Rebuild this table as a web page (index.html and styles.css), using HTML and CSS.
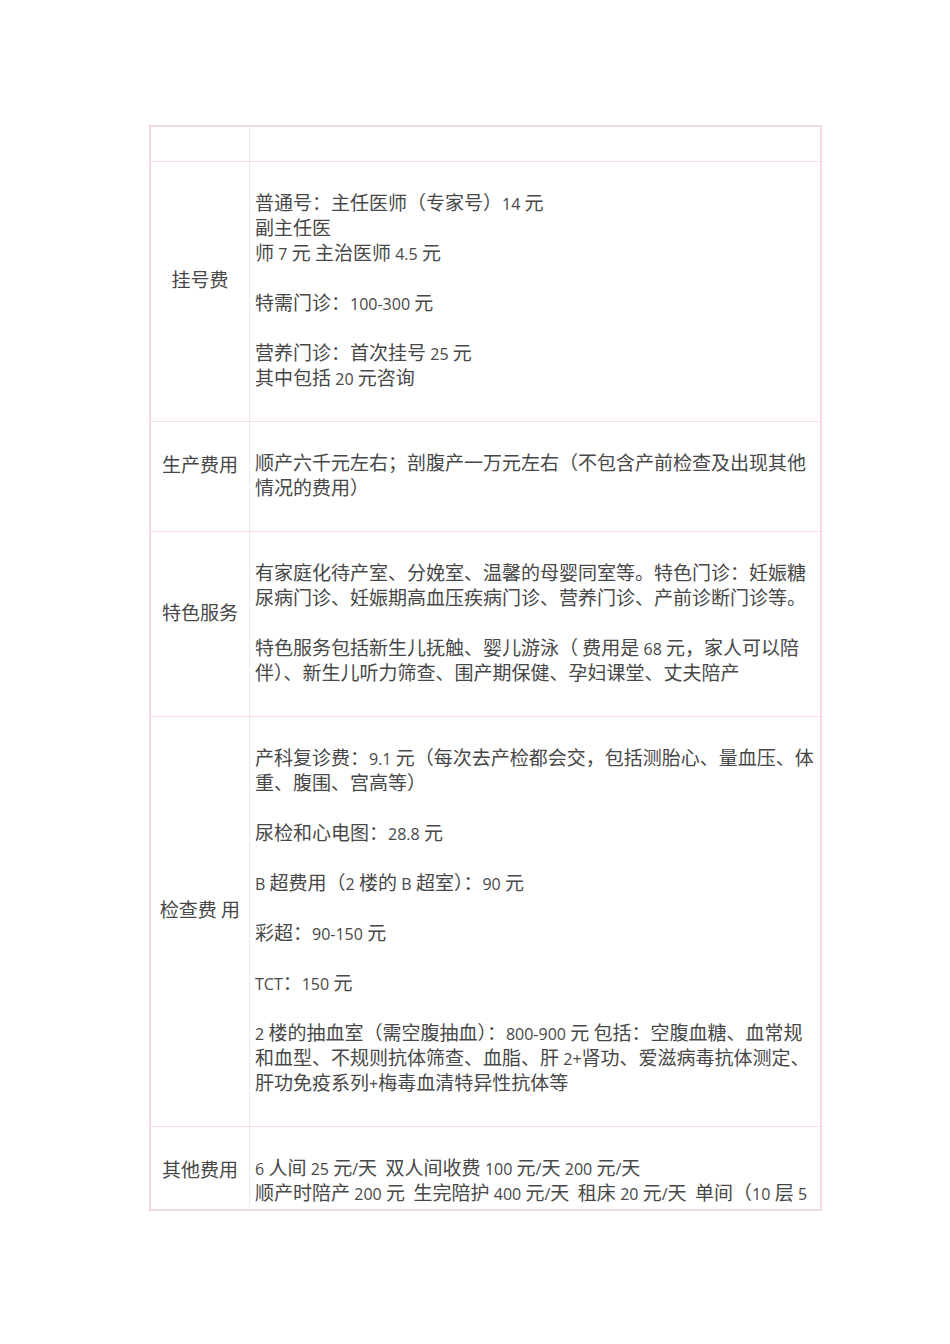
FILE: index.html
```html
<!DOCTYPE html>
<html lang="zh-CN">
<head>
<meta charset="utf-8">
<title>费用</title>
<link rel="stylesheet" href="styles.css">
</head>
<body>
<div class="page">
<table class="fees">
  <tr class="empty">
    <td class="lbl"></td>
    <td class="txt"></td>
  </tr>
  <tr>
    <td class="lbl up">挂号费</td>
    <td class="txt">普通号：主任医师（专家号）<span class="n">14</span> 元<br>副主任医<br>师 <span class="n">7</span> 元 主治医师 <span class="n">4.5</span> 元<br><br>特需门诊：<span class="n">100-300</span> 元<br><br>营养门诊：首次挂号 <span class="n">25</span> 元<br>其中包括 <span class="n">20</span> 元咨询</td>
  </tr>
  <tr>
    <td class="lbl up">生产费用</td>
    <td class="txt">顺产六千元左右；剖腹产一万元左右（不包含产前检查及出现其他<br>情况的费用）</td>
  </tr>
  <tr>
    <td class="lbl up">特色服务</td>
    <td class="txt">有家庭化待产室、分娩室、温馨的母婴同室等。特色门诊：妊娠糖<br>尿病门诊、妊娠期高血压疾病门诊、营养门诊、产前诊断门诊等。<br><br>特色服务包括新生儿抚触、婴儿游泳（ 费用是 <span class="n">68</span> 元，家人可以陪<br>伴）、新生儿听力筛查、围产期保健、孕妇课堂、丈夫陪产</td>
  </tr>
  <tr>
    <td class="lbl up">检查费 用</td>
    <td class="txt">产科复诊费：<span class="n">9.1</span> 元（每次去产检都会交，包括测胎心、量血压、体<br>重、腹围、宫高等）<br><br>尿检和心电图：<span class="n">28.8</span> 元<br><br><span class="n">B</span> 超费用（<span class="n">2</span> 楼的 <span class="n">B</span> 超室）：<span class="n">90</span> 元<br><br>彩超：<span class="n">90-150</span> 元<br><br><span class="n">TCT</span>：<span class="n">150</span> 元<br><br><span class="n">2</span> 楼的抽血室（需空腹抽血）：<span class="n">800-900</span> 元 包括：空腹血糖、血常规<br>和血型、不规则抗体筛查、血脂、肝 <span class="n">2+</span>肾功、爱滋病毒抗体测定、<br>肝功免疫系列<span class="n">+</span>梅毒血清特异性抗体等</td>
  </tr>
  <tr class="last">
    <td class="lbl">其他费用</td>
    <td class="txt"><span class="n">6</span> 人间 <span class="n">25</span> 元<span class="n">/</span>天&nbsp; 双人间收费 <span class="n">100</span> 元<span class="n">/</span>天 <span class="n">200</span> 元<span class="n">/</span>天<br>顺产时陪产 <span class="n">200</span> 元&nbsp; 生完陪护 <span class="n">400</span> 元<span class="n">/</span>天&nbsp; 租床 <span class="n">20</span> 元<span class="n">/</span>天&nbsp; 单间（<span class="n">10</span> 层 <span class="n">5</span></td>
  </tr>
</table>
</div>
</body>
</html>
```

FILE: styles.css
```css
html, body {
  margin: 0;
  padding: 0;
  background: #ffffff;
}

.page {
  width: 950px;
  height: 1344px;
  padding: 125px 0 0 149px;
  box-sizing: border-box;
}

.fees {
  border-collapse: collapse;
  width: 673px;
  table-layout: fixed;
  border: 2px solid #f6d9e1;
  font-family: "Noto Sans CJK SC", "Open Sans", sans-serif;
  font-size: 19px;
  line-height: 25px;
  color: #474747;
}

.fees td {
  border-bottom: 1px solid #f6dde4;
  padding: 0;
}

.fees td.lbl {
  width: 98px;
  border-right: 1px solid #ececec;
  text-align: center;
  vertical-align: middle;
  white-space: nowrap;
}

.fees td.lbl.up {
  padding-bottom: 26px;
}

.fees td.txt {
  padding: 27px 4px 32px 5px;
  vertical-align: top;
  white-space: nowrap;
  overflow: hidden;
}

.fees tr.empty td {
  height: 34px;
  padding: 0;
}

.fees tr.last td.txt {
  padding-bottom: 5px;
}

.n {
  font-family: "Open Sans", sans-serif;
  font-size: 16px;
  line-height: 1;
}
```
